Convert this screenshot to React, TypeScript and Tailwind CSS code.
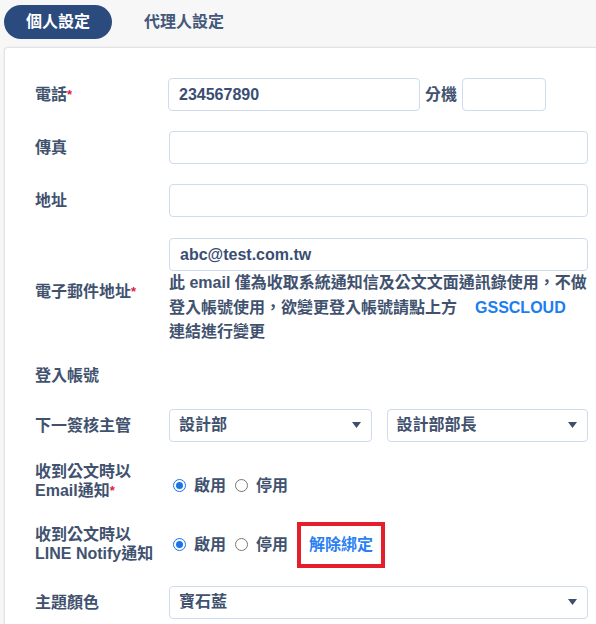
import React from "react";

const font = "font-['Liberation_Sans','Noto_Sans_CJK_TC',sans-serif]";

const Label = ({ children, required }: { children: React.ReactNode; required?: boolean }) => (
  <div className="w-[133px] shrink-0 text-[16px] leading-[19px] text-[#41526f] font-semibold">
    {children}
    {required && <span className="text-[#e0203a] text-[13px] align-top">*</span>}
  </div>
);

const Input = ({ value, className = "" }: { value?: string; className?: string }) => (
  <div
    className={`h-[33px] rounded border border-[#cfdbee] bg-white px-[10px] flex items-center text-[16px] font-bold text-[#3a4e74] ${className}`}
  >
    {value}
  </div>
);

const Select = ({ value, className = "" }: { value: string; className?: string }) => (
  <div
    className={`h-[33px] rounded border border-[#cfdbee] bg-white pl-[9px] pr-[10px] flex items-center justify-between text-[16px] text-[#41526f] font-semibold ${className}`}
  >
    <span>{value}</span>
    <svg width="9" height="6" viewBox="0 0 9 6">
      <path d="M0 0h9L4.5 6z" fill="#3e4f6c" />
    </svg>
  </div>
);

const Radio = ({ checked, label }: { checked?: boolean; label: string }) => (
  <div className="flex items-center gap-[8px]">
    {checked ? (
      <span className="w-[13px] h-[13px] rounded-full border-[1.5px] border-[#1a73e8] flex items-center justify-center">
        <span className="w-[7px] h-[7px] rounded-full bg-[#1a73e8]" />
      </span>
    ) : (
      <span className="w-[13px] h-[13px] rounded-full border border-[#767676]" />
    )}
    <span className="text-[16px] text-[#41526f] font-semibold">{label}</span>
  </div>
);

export default function App() {
  return (
    <div className={`w-[596px] h-[624px] bg-[#f7f7f7] overflow-hidden ${font}`}>
      {/* tabs */}
      <div className="flex items-center h-[47px] pl-[4px] pb-[7px] pt-[3px]">
        <div className="w-[108px] h-[34px] rounded-full bg-[#2b4a7d] text-white text-[16px] font-bold flex items-center justify-center">
          個人設定
        </div>
        <div className="ml-[32px] text-[16px] text-[#44587a] font-semibold">代理人設定</div>
      </div>

      {/* card */}
      <div className="ml-[4px] w-[620px] h-[600px] bg-white rounded-tl-[4px] border-l border-t border-[#e3e3e3] shadow-[0_0_2px_rgba(0,0,0,0.08)] pl-[30px]">
        <div className="w-[553px] pt-[30px] flex flex-col">
          {/* phone */}
          <div className="flex items-center h-[33px]">
            <Label required>電話</Label>
            <Input value="234567890" className="w-[252px]" />
            <span className="mx-[5px] text-[16px] text-[#41526f] font-semibold whitespace-nowrap">分機</span>
            <Input className="w-[84px]" />
          </div>

          <div className="flex items-center h-[33px] mt-[20px]">
            <Label>傳真</Label>
            <Input className="flex-1 ml-[1px]" />
          </div>

          <div className="flex items-center h-[33px] mt-[20px]">
            <Label>地址</Label>
            <Input className="flex-1 ml-[1px]" />
          </div>

          {/* email */}
          <div className="flex items-center mt-[21px]">
            <Label required>電子郵件地址</Label>
            <div className="flex-1 ml-[1px]">
              <Input value="abc@test.com.tw" />
              <div className="mt-[0px] mb-[1px] text-[16px] leading-[24.5px] text-[#41526f] font-semibold">
                此 <span className="font-bold">email</span> 僅為收取系統通知信及公文文面通訊錄使用，不做登入帳號使用，欲變更登入帳號請點上方
                <span className="ml-[18px] text-[#1a7ef0] font-bold">GSSCLOUD</span>
                <br />
                連結進行變更
              </div>
            </div>
          </div>

          <div className="flex items-center h-[20px] mt-[20px]">
            <Label>登入帳號</Label>
          </div>

          {/* supervisor */}
          <div className="flex items-center h-[33px] mt-[23px]">
            <Label>下一簽核主管</Label>
            <Select value="設計部" className="w-[203px] ml-[1px]" />
            <Select value="設計部部長" className="w-[202px] ml-[15px]" />
          </div>

          {/* email notify */}
          <div className="flex items-start mt-[20px]">
            <Label required>
              收到公文時以
              <br />
              Email通知
            </Label>
            <div className="flex items-center gap-[9px] ml-[5px] mt-[12px]">
              <Radio checked label="啟用" />
              <Radio label="停用" />
            </div>
          </div>

          {/* line notify */}
          <div className="flex items-start mt-[25px]">
            <Label>
              收到公文時以
              <br />
              LINE Notify通知
            </Label>
            <div className="flex items-center gap-[9px] ml-[5px] mt-[-3px]">
              <Radio checked label="啟用" />
              <Radio label="停用" />
              <div className="w-[88px] h-[46px] border-[4px] border-[#e41e2a] flex items-center justify-center text-[16px] text-[#2a7ff2] font-semibold">
                解除綁定
              </div>
            </div>
          </div>

          {/* theme */}
          <div className="flex items-center h-[33px] mt-[18px]">
            <Label>主題顏色</Label>
            <Select value="寶石藍" className="flex-1 ml-[1px]" />
          </div>
        </div>
      </div>
    </div>
  );
}
